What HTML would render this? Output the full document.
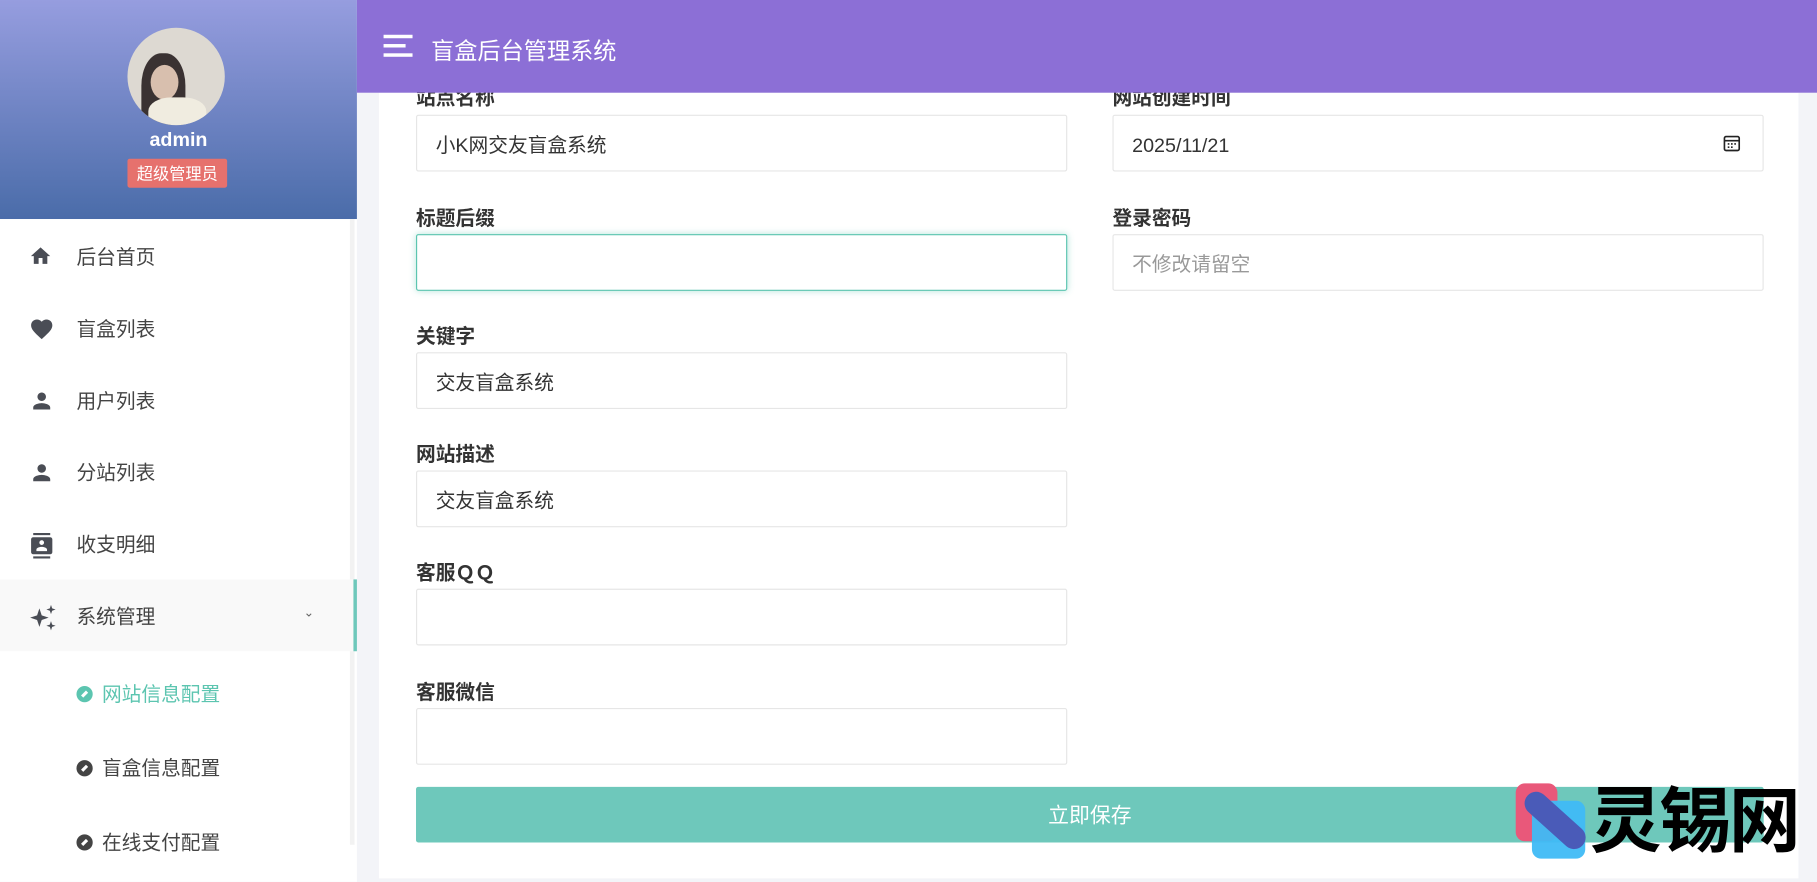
<!DOCTYPE html>
<html><head><meta charset="utf-8">
<style>
*{margin:0;padding:0;box-sizing:border-box}
html,body{width:1817px;height:882px;overflow:hidden;background:#f3f4f8}
body{font-family:"Liberation Sans","Noto Sans CJK SC",sans-serif}
#w{width:1568px;height:761px;transform:scale(1.15880);transform-origin:0 0;position:relative;background:#f3f4f8}
.a{position:absolute}
.side{left:0;top:0;width:308px;height:761px;background:#fff}
.shead{left:0;top:0;width:308px;height:189px;background:linear-gradient(#969ddf,#4a6ca9)}
.mi{position:absolute;left:0;width:305px;height:62px;font-size:17px;color:#444;line-height:66px}
.mi svg{position:absolute;left:25px;top:21px}
.mi span{position:absolute;left:66px}
.sub{position:absolute;left:66px;font-size:17px;color:#444;line-height:20px}
.sub i{display:inline-block;width:14px;height:14px;border-radius:50%;background:#444;vertical-align:-1px;margin-right:8px;position:relative}
.sub i:after{content:"";position:absolute;left:4px;top:4px;width:6px;height:6px;background:#fff;transform:rotate(45deg) scaleX(.45)}
.lab{position:absolute;font-size:17px;font-weight:bold;color:#333}
.inp{position:absolute;height:49px;border:1px solid #e6e6e6;border-radius:2px;background:#fff;font-size:17px;color:#333;line-height:52px;padding-left:16px}
</style></head><body><div id="w">
<div class="a side"></div>
<div class="a shead"></div>
<div class="a" style="left:110px;top:24px;width:84px;height:84px;border-radius:50%;background:#ddd9d2;overflow:hidden">
<div class="a" style="left:12px;top:22px;width:38px;height:62px;border-radius:45% 45% 10% 10%;background:#3a3232"></div>
<div class="a" style="left:20px;top:32px;width:24px;height:30px;border-radius:50%;background:#d8bfae"></div>
<div class="a" style="left:18px;top:60px;width:50px;height:30px;border-radius:40%;background:#f0ece0"></div>
</div>
<div class="a" style="left:0;width:308px;top:111px;text-align:center;color:#fff;font-weight:bold;font-size:17px">admin</div>
<div class="a" style="left:110px;top:137px;width:86px;height:25px;background:#e6716d;border-radius:2px;color:#fff;font-size:14px;line-height:26px;text-align:center">超级管理员</div>
<div class="a" style="left:302px;top:189px;width:4px;height:540px;background:#f2f2f2"></div>

<div class="mi" style="top:190px"><svg width="20" height="20" viewBox="0 0 24 24"><path fill="#4a4d55" d="M10 20v-6h4v6h5v-8h3L12 3 2 12h3v8z"/></svg><span>后台首页</span></div>
<div class="mi" style="top:252px"><svg width="22" height="22" viewBox="0 0 24 24"><path fill="#4a4d55" d="M12 21.4l-1.5-1.3C5.4 15.4 2 12.3 2 8.5 2 5.4 4.4 3 7.5 3c1.7 0 3.4.8 4.5 2.1C13.1 3.8 14.8 3 16.5 3 19.6 3 22 5.4 22 8.5c0 3.8-3.4 6.9-8.5 11.5z"/></svg><span>盲盒列表</span></div>
<div class="mi" style="top:314px"><svg width="22" height="22" viewBox="0 0 24 24"><path fill="#4a4d55" d="M12 12c2.2 0 4-1.8 4-4s-1.8-4-4-4-4 1.8-4 4 1.8 4 4 4zm0 2c-2.7 0-8 1.3-8 4v2h16v-2c0-2.7-5.3-4-8-4z"/></svg><span>用户列表</span></div>
<div class="mi" style="top:376px"><svg width="22" height="22" viewBox="0 0 24 24"><path fill="#4a4d55" d="M12 12c2.2 0 4-1.8 4-4s-1.8-4-4-4-4 1.8-4 4 1.8 4 4 4zm0 2c-2.7 0-8 1.3-8 4v2h16v-2c0-2.7-5.3-4-8-4z"/></svg><span>分站列表</span></div>
<div class="mi" style="top:438px"><svg width="22" height="24" viewBox="0 0 24 24"><path fill="#4a4d55" d="M4 0h16v2H4zM4 22h16v2H4zM20 4H4c-1.1 0-2 .9-2 2v12c0 1.1.9 2 2 2h16c1.1 0 2-.9 2-2V6c0-1.1-.9-2-2-2zm-8 2.8c1.2 0 2.2 1 2.2 2.2s-1 2.2-2.2 2.2-2.2-1-2.2-2.2 1-2.2 2.2-2.2zM17 17H7v-1.5c0-1.7 3.3-2.5 5-2.5s5 .8 5 2.5z"/></svg><span>收支明细</span></div>
<div class="mi" style="top:500px;background:#f9f9f9"><svg width="24" height="24" viewBox="0 0 24 24"><path fill="#4a4d55" d="M9 4l2 6 6 2-6 2-2 6-2-6-6-2 6-2zM19 1l1 3 3 1-3 1-1 3-1-3-3-1 3-1zM19 15l1 3 3 1-3 1-1 3-1-3-3-1 3-1z"/></svg><span>系统管理</span><b style="position:absolute;left:262px;top:-4px;font-weight:normal;font-size:11px;color:#666">⌄</b></div>
<div class="a" style="left:305px;top:500px;width:3px;height:62px;background:#6ec8bb"></div>
<div class="sub" style="top:590px;color:#5cc5b0"><i style="background:#5cc5b0"></i>网站信息配置</div>
<div class="sub" style="top:654px"><i></i>盲盒信息配置</div>
<div class="sub" style="top:718px"><i></i>在线支付配置</div>

<div class="a" style="left:327px;top:80px;width:1225px;height:678px;background:#fff"></div>
<div class="lab" style="left:359px;top:70px">站点名称</div>
<div class="lab" style="left:960px;top:70px">网站创建时间</div>
<div class="inp" style="left:359px;top:99px;width:562px">小K网交友盲盒系统</div>
<div class="inp" style="left:960px;top:99px;width:562px">2025/11/21<svg style="position:absolute;right:18px;top:15px" width="17" height="17" viewBox="0 0 24 24"><rect x="3" y="4" width="18" height="17" rx="2" fill="none" stroke="#222" stroke-width="2"/><path d="M3 9h18" stroke="#222" stroke-width="2"/><path d="M7 12h2v2H7zM11 12h2v2h-2zM15 12h2v2h-2zM7 16h2v2H7zM11 16h2v2h-2z" fill="#222"/></svg></div>
<div class="lab" style="left:359px;top:174px">标题后缀</div>
<div class="lab" style="left:960px;top:174px">登录密码</div>
<div class="inp" style="left:359px;top:202px;width:562px;border-color:#5cc5b0;box-shadow:0 0 6px rgba(92,197,176,.45)"></div>
<div class="inp" style="left:960px;top:202px;width:562px;color:#999">不修改请留空</div>
<div class="lab" style="left:359px;top:276px">关键字</div>
<div class="inp" style="left:359px;top:304px;width:562px">交友盲盒系统</div>
<div class="lab" style="left:359px;top:378px">网站描述</div>
<div class="inp" style="left:359px;top:406px;width:562px">交友盲盒系统</div>
<div class="lab" style="left:359px;top:480px">客服ＱＱ</div>
<div class="inp" style="left:359px;top:508px;width:562px"></div>
<div class="lab" style="left:359px;top:583px">客服微信</div>
<div class="inp" style="left:359px;top:611px;width:562px"></div>
<div class="a" style="left:359px;top:679px;width:1163px;height:48px;background:#6ec8bb;border-radius:2px;color:#fff;font-size:18px;line-height:50px;text-align:center">立即保存</div>

<div class="a" style="left:1308px;top:676px;width:60px;height:70px">
<div class="a" style="left:0;top:0;width:36px;height:50px;background:#e9587a;border-radius:8px"></div>
<div class="a" style="left:14px;top:15px;width:46px;height:50px;background:#3fbaf5;border-radius:8px;opacity:.95"></div>
<div class="a" style="left:2px;top:22px;width:64px;height:20px;background:#4a5bb8;border-radius:10px;transform:rotate(42deg)"></div>
</div>
<div class="a" style="left:1372px;top:674px;font-size:62px;font-weight:bold;color:#000;line-height:72px;letter-spacing:-2px">灵锡网</div>

<div class="a" style="left:308px;top:0;width:1260px;height:80px;background:#8c6fd6"></div>
<div class="a" style="left:331px;top:30px;width:25px;height:3px;background:#fff"></div>
<div class="a" style="left:331px;top:38px;width:19px;height:3px;background:#fff"></div>
<div class="a" style="left:331px;top:46px;width:25px;height:3px;background:#fff"></div>
<div class="a" style="left:372px;top:28px;font-size:20px;color:#fff">盲盒后台管理系统</div>
</div></body></html>
